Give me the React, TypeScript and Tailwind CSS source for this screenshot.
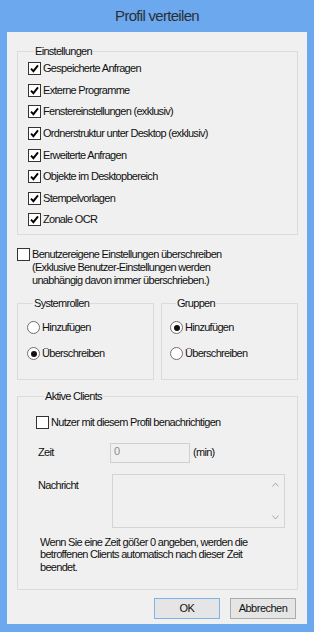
import React from 'react';

const font = "font-['Liberation_Sans',Arial,sans-serif]";

function CheckBox({ checked }: { checked?: boolean }) {
  return (
    <span className="flex h-[13px] w-[13px] shrink-0 items-center justify-center border border-[#333333] bg-white">
      {checked && (
        <svg width="9" height="9" viewBox="0 0 9 9">
          <path d="M1 4.6 L3.4 7.2 L8 1.4" fill="none" stroke="#000" strokeWidth="1.9" />
        </svg>
      )}
    </span>
  );
}

function Radio({ checked }: { checked?: boolean }) {
  return (
    <span className="flex h-[13px] w-[13px] shrink-0 items-center justify-center rounded-full border border-[#6f6f6f] bg-white">
      {checked && <span className="h-[6px] w-[6px] rounded-full bg-[#111]" />}
    </span>
  );
}

function Group({ title, className, children }: { title: string; className?: string; children: React.ReactNode }) {
  return (
    <fieldset className={`border border-[#dcdcdc] ${className ?? ''}`}>
      <legend className="ml-[6px] px-[1px] text-[11px] leading-[13px] text-[#111]">{title}</legend>
      {children}
    </fieldset>
  );
}

const settings = [
  'Gespeicherte Anfragen',
  'Externe Programme',
  'Fenstereinstellungen (exklusiv)',
  'Ordnerstruktur unter Desktop (exklusiv)',
  'Erweiterte Anfragen',
  'Objekte im Desktopbereich',
  'Stempelvorlagen',
  'Zonale OCR',
];

export default function App() {
  return (
    <div className={`flex h-[632px] w-[314px] flex-col bg-[#6ba8ee] px-[7px] pb-[8px] ${font}`}>
      <div className="flex h-[32px] shrink-0 items-center justify-center text-[15px] tracking-[-0.7px] text-[#2a2f36]">
        Profil verteilen
      </div>

      <div className="flex flex-1 flex-col bg-[#f0f0f0] pl-[10px] pr-[9px] pt-[13px] text-[11px] leading-[13px] tracking-[-0.7px] text-[#111]">
        <Group title="Einstellungen" className="pb-[3px] pl-[10px]">
          {settings.map((s) => (
            <div key={s} className="flex h-[21.6px] items-center gap-[2px]">
              <CheckBox checked />
              <span>{s}</span>
            </div>
          ))}
        </Group>

        <div className="mt-[13px] flex gap-[2px]">
          <CheckBox />
          <div>
            Benutzereigene Einstellungen überschreiben
            <br />
            (Exklusive Benutzer-Einstellungen werden
            <br />
            unabhängig davon immer überschrieben.)
          </div>
        </div>

        <div className="mt-[10px] flex gap-[7px]">
          <Group title="Systemrollen" className="w-[137px] pb-[12px] pl-[9px] pt-[5px]">
            <div className="flex h-[26px] items-center gap-[2px]">
              <Radio />
              <span>Hinzufügen</span>
            </div>
            <div className="flex h-[26px] items-center gap-[2px]">
              <Radio checked />
              <span>Überschreiben</span>
            </div>
          </Group>
          <Group title="Gruppen" className="w-[137px] pb-[12px] pl-[8px] pt-[5px]">
            <div className="flex h-[26px] items-center gap-[2px]">
              <Radio checked />
              <span>Hinzufügen</span>
            </div>
            <div className="flex h-[26px] items-center gap-[2px]">
              <Radio />
              <span>Überschreiben</span>
            </div>
          </Group>
        </div>

        <Group title="Aktive Clients" className="mt-[10px] pb-[16px] pl-[20px] pt-[10px]">
          <div className="-ml-[2px] flex h-[20px] items-center gap-[2px]">
            <CheckBox />
            <span>Nutzer mit diesem Profil benachrichtigen</span>
          </div>

          <div className="mt-[10px] flex items-center">
            <span className="w-[72px]">Zeit</span>
            <div className="flex h-[20px] w-[80px] items-start border border-[#cfcfcf] bg-[#f0f0f0] px-[3px] pt-[1px] text-[#8a8a8a]">
              0
            </div>
            <span className="ml-[3px]">(min)</span>
          </div>

          <div className="mt-[11px] flex items-start">
            <span className="mt-[5px] w-[74px]">Nachricht</span>
            <div className="flex h-[54px] w-[173px] justify-end border border-[#d4d4d4] bg-[#f0f0f0]">
              <div className="flex w-[17px] flex-col items-center justify-between py-[7px]">
                <svg width="7" height="5" viewBox="0 0 7 5">
                  <path d="M0.5 4.5 L3.5 1 L6.5 4.5" fill="none" stroke="#a8a8a8" strokeWidth="1" />
                </svg>
                <svg width="7" height="5" viewBox="0 0 7 5">
                  <path d="M0.5 0.5 L3.5 4 L6.5 0.5" fill="none" stroke="#a8a8a8" strokeWidth="1" />
                </svg>
              </div>
            </div>
          </div>

          <p className="mt-[8px] ml-[2px] leading-[12.5px]">
            Wenn Sie eine Zeit gößer 0 angeben, werden die
            <br />
            betroffenen Clients automatisch nach dieser Zeit
            <br />
            beendet.
          </p>
        </Group>

        <div className="mt-[8px] flex justify-end gap-[10px] pr-[2px]">
          <button className="h-[21px] w-[66px] border border-[#7eb4ea] bg-[#e5e5e5] text-[11px] tracking-[-0.5px] text-[#111]">
            OK
          </button>
          <button className="h-[21px] w-[66px] border border-[#acacac] bg-[#e5e5e5] text-[11px] tracking-[-0.5px] text-[#111]">
            Abbrechen
          </button>
        </div>
      </div>
    </div>
  );
}
